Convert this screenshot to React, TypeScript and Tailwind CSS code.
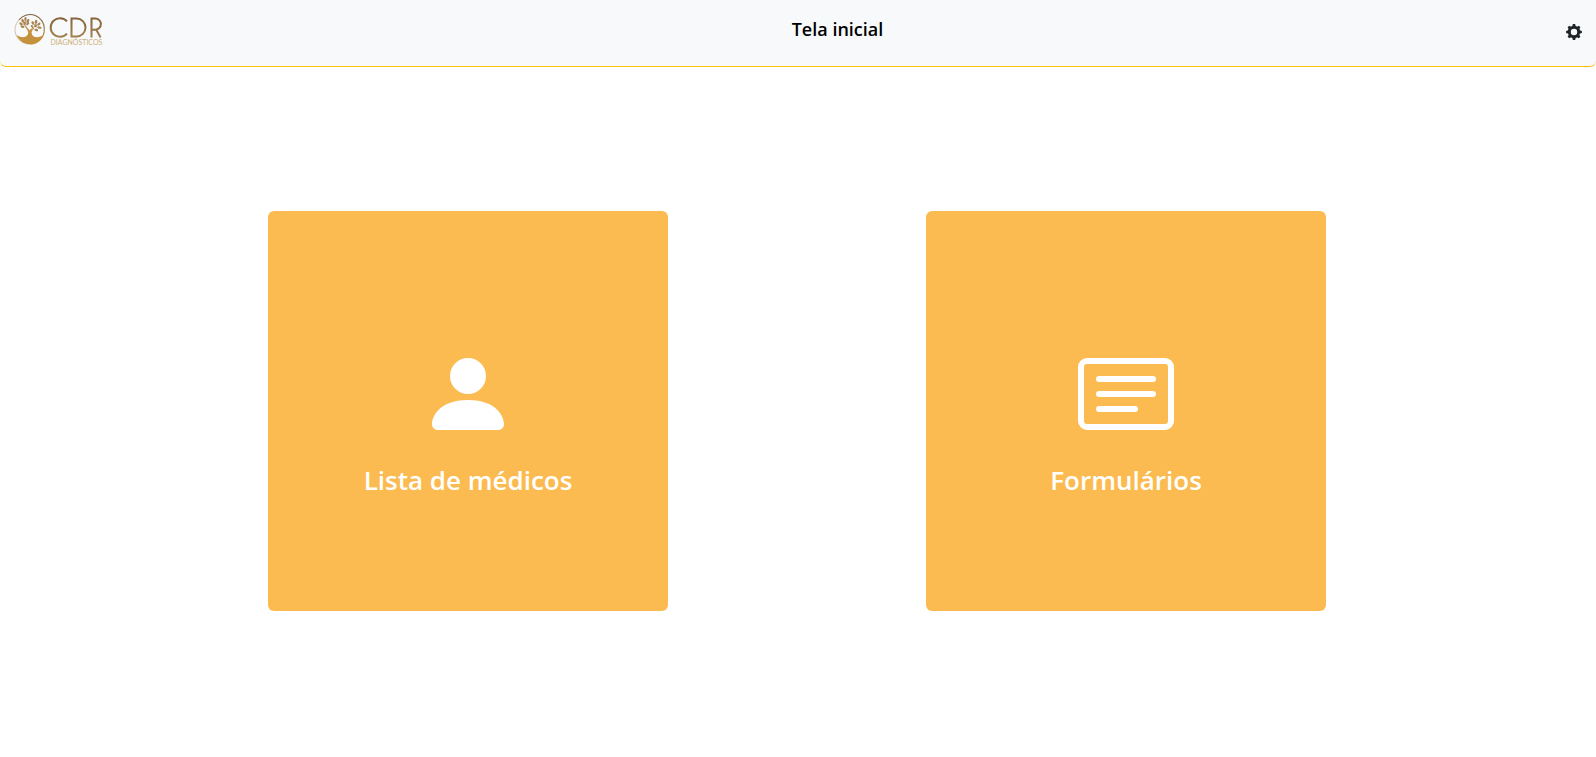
import type { ReactNode } from "react";
import { BsCardText, BsPersonFill } from "react-icons/bs";

function Logo() {
  return (
    <svg viewBox="0 0 95 34" className="h-[34px] w-[95px]" role="img" aria-label="CDR Diagnósticos">
      <defs>
        <linearGradient id="gold" x1="0" y1="0" x2="0" y2="1">
          <stop offset="0" stopColor="#7d6040" />
          <stop offset="1" stopColor="#c8953c" />
        </linearGradient>
        <linearGradient id="letters" x1="0" y1="0" x2="0" y2="1">
          <stop offset="0" stopColor="#86653e" />
          <stop offset="1" stopColor="#a3804e" />
        </linearGradient>
      </defs>
      <path
        d="M5 6.9A14.2 14.2 0 0 1 30.3 16.8A14.2 14.2 0 0 1 16 31"
        fill="none"
        stroke="url(#gold)"
        strokeWidth="1.1"
      />
      <path d="M16 31A14.2 14.2 0 0 1 5 6.9" fill="none" stroke="#cdbb9f" strokeWidth="0.9" />
      <path
        d="M2.6 21.8C6 25 12.2 25.2 14 21C14.8 18.8 13.4 16.6 11.2 14.6L12 13.8C13.8 15 14.8 16.2 15.5 17.4C16.4 16 17.8 15.3 19.8 15L20.1 15.9C18 16.8 17.1 18.6 17.8 21C19.4 25.4 25.6 25 29.8 21.4C27.2 27.8 22 31.3 16 31.3C10 31.3 5 27.8 2.6 21.8Z"
        fill="#c4923c"
      />
      <g stroke="#a98450" strokeWidth="0.7" fill="none">
        <path d="M12.5 14.5L9.5 12M12 14L11.2 6M11.5 10L14 7M19.5 15.3L22 10M20.5 13L24 14.5M21 12L19 10" />
      </g>
      <g fill="#a98450">
        <ellipse cx="11.5" cy="5.9" rx="1.2" ry="2" />
        <ellipse cx="14" cy="7.8" rx="1.2" ry="1.9" transform="rotate(25 14 7.8)" />
        <ellipse cx="8.8" cy="7.9" rx="1.3" ry="1.9" transform="rotate(-35 8.8 7.9)" />
        <ellipse cx="7" cy="10.8" rx="1.3" ry="1.9" transform="rotate(-60 7 10.8)" />
        <ellipse cx="13.8" cy="10.6" rx="1.2" ry="1.8" transform="rotate(40 13.8 10.6)" />
        <ellipse cx="8.4" cy="13.6" rx="1.2" ry="2" transform="rotate(-70 8.4 13.6)" />
        <ellipse cx="10.5" cy="10.4" rx="1.1" ry="1.6" />
        <ellipse cx="22" cy="8.8" rx="1.3" ry="2" transform="rotate(15 22 8.8)" />
        <ellipse cx="18.8" cy="10" rx="1.2" ry="1.9" transform="rotate(-25 18.8 10)" />
        <ellipse cx="24.8" cy="11.2" rx="1.2" ry="1.9" transform="rotate(50 24.8 11.2)" />
        <ellipse cx="25.6" cy="14.6" rx="1.2" ry="1.9" transform="rotate(100 25.6 14.6)" />
        <ellipse cx="22.3" cy="17" rx="1.2" ry="1.9" transform="rotate(110 22.3 17)" />
        <ellipse cx="18" cy="13.4" rx="1.1" ry="1.6" transform="rotate(-40 18 13.4)" />
        <ellipse cx="21.8" cy="12.8" rx="1.1" ry="1.6" transform="rotate(30 21.8 12.8)" />
      </g>
      <g fill="none" stroke="url(#letters)" strokeWidth="2">
        <path d="M53 8.4A9.3 9.3 0 1 0 53 20.6" />
        <path d="M57.5 5.5V23.5H62.5A9 9 0 0 0 62.5 5.5Z" />
        <path d="M77.5 24.5V5.5H81.3A5.6 5.6 0 0 1 81.3 16.7H77.5M82.3 16.7L86.6 24.5" />
      </g>
      <text x="36.5" y="31.5" fontSize="7" fill="#cdb07c" fontFamily="Lato, sans-serif">
        DIAGNÓSTICOS
      </text>
    </svg>
  );
}

const toothAngles = [0, 45, 90, 135, 180, 225, 270, 315];

function GearIcon() {
  return (
    <svg viewBox="0 0 16 16" className="size-4" aria-hidden="true">
      <circle cx="8" cy="8" r="4.7" fill="none" stroke="currentColor" strokeWidth="3" />
      {toothAngles.map((angle) => (
        <path key={angle} d="M6.2 2.6L6.9 0.1H9.1L9.8 2.6Z" fill="currentColor" transform={`rotate(${angle} 8 8)`} />
      ))}
    </svg>
  );
}

function MenuCard({ icon, label }: { icon: ReactNode; label: string }) {
  return (
    <a
      href="#"
      className="flex aspect-square w-full max-w-[400px] flex-col items-center justify-center gap-5 rounded-md bg-[#fbbb50] pt-[22px] text-white"
    >
      {icon}
      <h3 className="text-[26px] leading-9 font-semibold">{label}</h3>
    </a>
  );
}

export default function App() {
  return (
    <div className="min-h-screen bg-white font-['Open_Sans','Noto_Sans',sans-serif] text-[#212529]">
      <header className="flex items-start justify-between rounded-b-md border-b border-[#ffc107] bg-[#f8f9fa] px-[14px] pt-[13px] pb-[19px]">
        <a href="#">
          <Logo />
        </a>
        <h1 className="text-lg leading-8 font-semibold text-black">Tela inicial</h1>
        <button type="button" aria-label="Configurações" className="pt-[11px]">
          <GearIcon />
        </button>
      </header>
      <main className="mx-auto grid max-w-[1318px] grid-cols-2 justify-items-center pt-36 pr-0.5">
        <MenuCard icon={<BsPersonFill className="size-24" />} label="Lista de médicos" />
        <MenuCard icon={<BsCardText className="size-24" />} label="Formulários" />
      </main>
    </div>
  );
}
